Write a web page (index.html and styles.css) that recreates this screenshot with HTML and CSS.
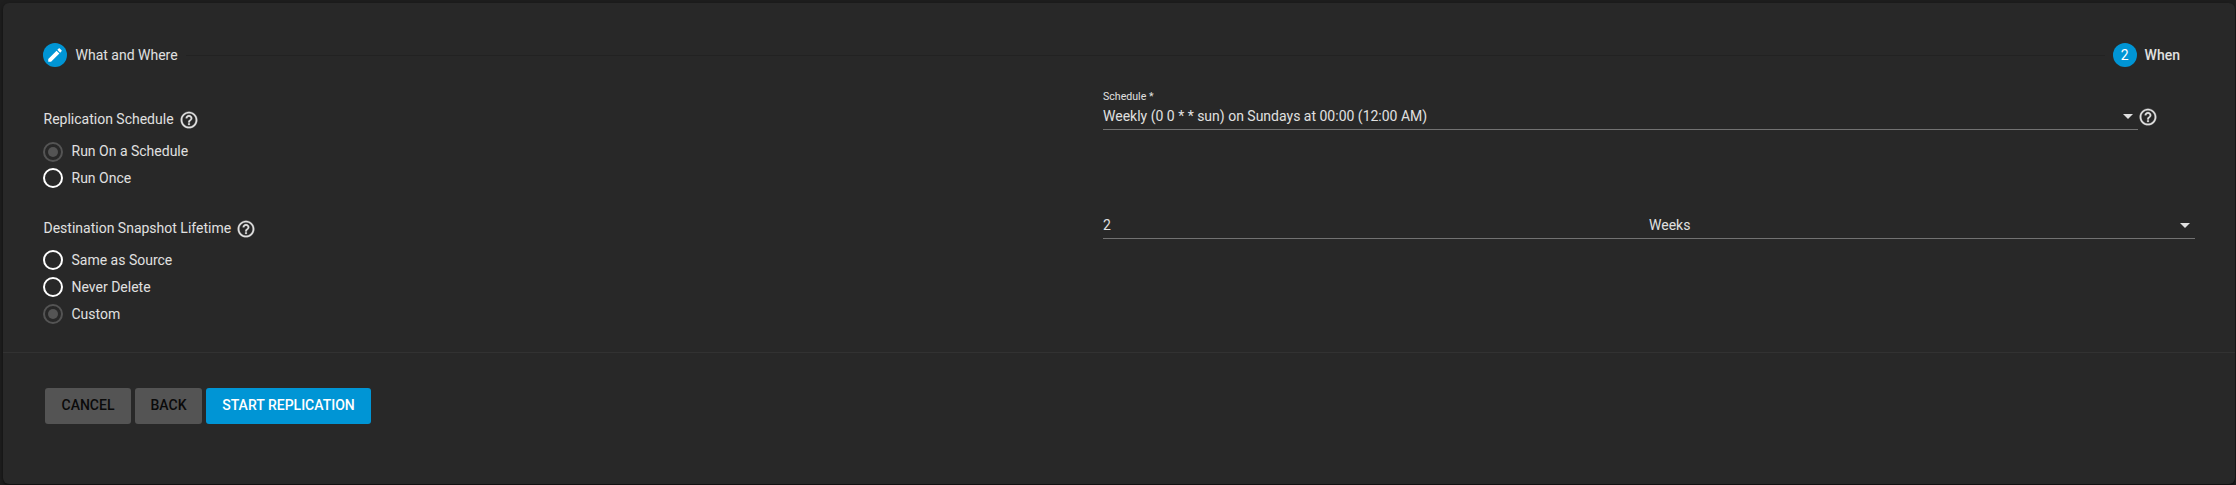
FILE: index.html
```html
<!DOCTYPE html>
<html lang="en">
<head>
<meta charset="utf-8">
<title>Replication</title>
<link rel="stylesheet" href="styles.css">
</head>
<body>
<svg class="defs" width="0" height="0" aria-hidden="true">
  <symbol id="help" viewBox="0 0 24 24"><path d="M11 18h2v-2h-2v2zm1-16C6.48 2 2 6.48 2 12s4.48 10 10 10 10-4.480 10-10S17.520 2 12 2zm0 18c-4.410 0-8-3.590-8-8s3.590-8 8-8 8 3.590 8 8-3.590 8-8 8zm0-14c-2.210 0-4 1.790-4 4h2c0-1.100.9-2 2-2s2 .9 2 2c0 2-3 1.750-3 5h2c0-2.250 3-2.500 3-5 0-2.210-1.790-4-4-4z"/></symbol>
</svg>
<main class="card">
  <header class="stepper">
    <span class="step-icon"><svg viewBox="0 0 24 24" width="18" height="18"><path d="M3 17.250V21h3.750L17.810 9.940l-3.750-3.750L3 17.250zM20.710 7.040c.39-.39.39-1.020 0-1.410l-2.340-2.340c-.39-.39-1.020-.39-1.410 0l-1.830 1.830 3.750 3.750 1.830-1.830z"/></svg></span>
    <span class="step-label">What and Where</span>
    <span class="step-line"></span>
    <span class="step-icon">2</span>
    <span class="step-label current">When</span>
  </header>
  <section class="form">
    <div class="column options">
      <div class="group">
        <div class="title">Replication Schedule<svg class="help"><use href="#help"/></svg></div>
        <label class="radio"><span class="dot checked low"></span>Run On a Schedule</label>
        <label class="radio"><span class="dot"></span>Run Once</label>
      </div>
      <div class="group">
        <div class="title">Destination Snapshot Lifetime<svg class="help"><use href="#help"/></svg></div>
        <label class="radio"><span class="dot"></span>Same as Source</label>
        <label class="radio"><span class="dot"></span>Never Delete</label>
        <label class="radio"><span class="dot checked"></span>Custom</label>
      </div>
    </div>
    <div class="column fields">
      <div class="schedule">
        <div class="select-field">
          <span class="hint">Schedule *</span>
          <div class="select"><span>Weekly (0 0 * * sun) on Sundays at 00:00 (12:00 AM)</span><span class="arrow"></span></div>
        </div>
        <svg class="help"><use href="#help"/></svg>
      </div>
      <div class="lifetime">
        <span class="amount">2</span>
        <div class="unit"><span>Weeks</span><span class="arrow"></span></div>
      </div>
    </div>
  </section>
  <footer class="actions">
    <button class="btn cancel">CANCEL</button>
    <button class="btn back">BACK</button>
    <button class="btn primary">START REPLICATION</button>
  </footer>
</main>
</body>
</html>
```
FILE: styles.css
```css
* { box-sizing: border-box; }
body {
  margin: 0;
  padding: 3px 1px 1px 3px;
  height: 485px;
  overflow: hidden;
  background: #1e1e1e;
  color: #e0e0e0;
  font: 14px/20px Roboto, sans-serif;
}
.defs { position: absolute; }
.card {
  height: 481px;
  background: #282828;
  border-radius: 6px;
  box-shadow: 0 2px 2px rgba(0, 0, 0, .3), 0 1px 4px rgba(0, 0, 0, .3);
}
.stepper {
  display: flex;
  align-items: center;
  height: 64px;
  margin: 0 55px 0 40px;
  padding-top: 40px;
}
.step-icon {
  display: flex;
  align-items: center;
  justify-content: center;
  width: 24px;
  height: 24px;
  border-radius: 50%;
  background: #0095d5;
  color: #fff;
}
.step-icon svg, .help { fill: currentColor; }
.step-label { margin-left: 8.5px; }
.step-label.current { margin-left: 8px; font-weight: 500; }
.step-line {
  flex: 1;
  height: 1px;
  margin: 0 8px;
  background: #222;
}
.form {
  display: grid;
  grid-template-columns: 1060px 1092px;
  height: 285px;
  padding-left: 40px;
}
.options { padding-top: 42px; }
.group + .group { margin-top: 26px; }
.title {
  display: flex;
  align-items: center;
  height: 20px;
  margin-bottom: 9px;
  padding-left: .5px;
}
.title .help { margin: 1px 0 0 5px; }
.help {
  flex: none;
  width: 20px;
  height: 20px;
  stroke: currentColor;
  stroke-width: .3;
}
.radio {
  display: flex;
  align-items: center;
  height: 27px;
  gap: 8.5px;
  line-height: 18px;
  padding-bottom: 2px;
}
.dot {
  width: 20px;
  height: 20px;
  margin-top: 1px;
  border: 2px solid #fff;
  border-radius: 50%;
}
.dot.low { margin-top: 3px; }
.dot.checked {
  padding: 3px;
  border-color: #545454;
  background: #545454 content-box;
}
.schedule { display: flex; height: 63px; padding-top: 19px; }
.schedule .help { margin: 21px 0 0 -.4px; }
.select-field {
  display: flex;
  flex-direction: column;
  width: 1035px;
  border-bottom: 1px solid #727272;
}
.hint { font-size: 10.6px; line-height: 20px; padding-top: 1px; height: 20px; }
.select, .unit { display: flex; align-items: center; justify-content: space-between; }
.select { padding-right: 5px; height: 20px; }
.arrow {
  border: 5px solid transparent;
  border-top-color: #e0e0e0;
  border-bottom: 0;
}
.lifetime {
  display: grid;
  grid-template-columns: 1fr 1fr;
  height: 24px;
  margin-top: 85px;
  border-bottom: 1px solid #727272;
}
.unit { height: 20px; padding-right: 5px; }
.actions {
  display: flex;
  gap: 4px;
  padding: 35px 42px;
  border-top: 1px solid #323232;
}
.btn {
  height: 36px;
  padding: 0 0 2px;
  border: 0;
  border-radius: 3px;
  background: #545454;
  color: #0a0a0a;
  font: 500 14px/34px Roboto, sans-serif;
}
.btn.cancel { width: 86px; }
.btn.back { width: 67px; }
.btn.primary { width: 165px; background: #0095d5; color: #fff; }
```
